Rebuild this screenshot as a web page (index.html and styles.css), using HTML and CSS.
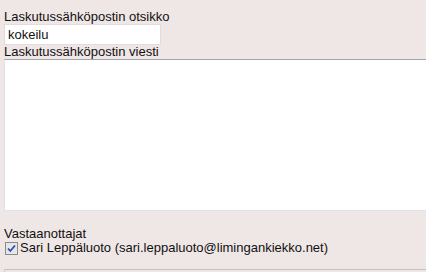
FILE: index.html
```html
<!DOCTYPE html>
<html lang="fi">
<head>
<meta charset="utf-8">
<link rel="stylesheet" href="styles.css">
</head>
<body>
<div class="form">
  <label class="label" for="otsikko">Laskutussähköpostin otsikko</label>
  <input id="otsikko" class="field" type="text" value="kokeilu">
  <label class="label" for="viesti">Laskutussähköpostin viesti</label>
  <textarea id="viesti" class="message"></textarea>
  <div class="label recipients-title">Vastaanottajat</div>
  <div class="recipient">
    <span class="check"><svg width="13" height="13" viewBox="0 0 13 13"><rect x="0.5" y="0.5" width="12" height="12" fill="#e6e6e6" stroke="#8a8a8a"/><path d="M3 6.5 L5.3 9 L10 3.5" fill="none" stroke="#2b4fb5" stroke-width="1.8"/></svg></span>
    <span>Sari Leppäluoto (sari.leppaluoto@limingankiekko.net)</span>
  </div>
  <div class="next-box"></div>
</div>
</body>
</html>
```
FILE: styles.css
```css
html, body {
  margin: 0;
  padding: 0;
  background: #efe6e6;
  overflow: hidden;
}
body {
  font-family: "Liberation Sans", Arial, sans-serif;
  font-size: 13px;
  color: #111;
}
.form {
  display: flex;
  flex-direction: column;
  align-items: flex-start;
  padding: 10px 0 0 4px;
}
.label {
  display: block;
  line-height: 14px;
  height: 14px;
}
.field {
  box-sizing: border-box;
  width: 157px;
  height: 21px;
  margin: 0;
  padding: 0 0 0 3px;
  border: 1px solid #e2dcdc;
  background: #fff;
  font-family: inherit;
  font-size: 13px;
  color: #111;
  outline: none;
}
.message {
  box-sizing: border-box;
  width: 440px;
  height: 152px;
  margin: 0;
  padding: 0;
  border: 1px solid #dfe2ea;
  border-top-color: #a4a4ac;
  background: #fff;
  resize: none;
  display: block;
}
.recipients-title {
  margin-top: 16px;
}
.recipient {
  display: flex;
  align-items: center;
  gap: 2px;
  line-height: 14px;
  margin-top: 0;
}
.check {
  display: flex;
  width: 13px;
  height: 13px;
  margin-left: 1px;
}
.next-box {
  margin-top: 14px;
  width: 440px;
  height: 10px;
  border-top: 1px solid #c4c0c0;
  border-left: 1px solid #d4d0d0;
}
```
